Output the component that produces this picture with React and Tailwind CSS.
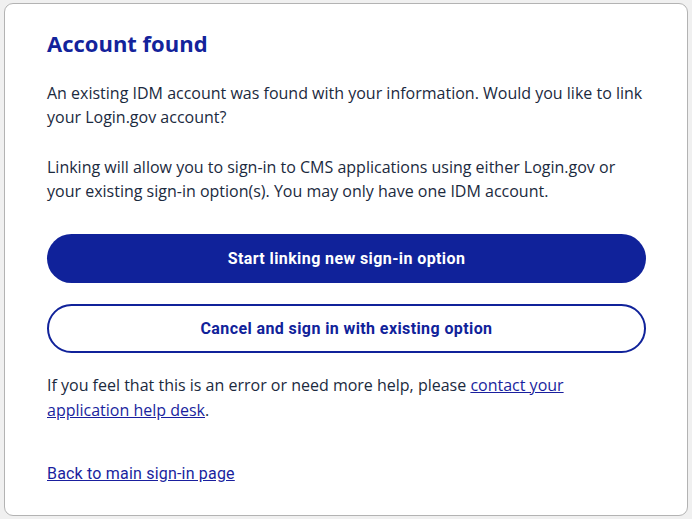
import React from "react";

const App = () => {
  return (
    <div className="min-h-[519px] bg-[#f0f0f0] p-[3px_4px_3px_4px]">
      <div
        className="h-[513px] bg-white border border-[#b3b3b3] rounded-[9px] pl-[42px] pr-[41px] pt-[26px]"
        style={{ fontFamily: '"Open Sans", sans-serif' }}
      >
        <h1 className="text-[22px] leading-[26px] font-bold text-[#13239b]">
          Account found
        </h1>

        <p className="mt-[25px] text-[16px] leading-[24px] text-[#1b2a3e]">
          An existing IDM account was found with your information. Would you like to link
          your Login.gov account?
        </p>

        <p className="mt-[26px] text-[16px] leading-[24px] text-[#1b2a3e]">
          Linking will allow you to sign-in to CMS applications using either Login.gov or
          your existing sign-in option(s). You may only have one IDM account.
        </p>

        <div className="mt-[31px] flex flex-col gap-[21px] font-['Roboto',sans-serif] tracking-[0.025em]">
          <button className="h-[49px] w-full rounded-full bg-[#10229a] text-white text-[16px] font-bold">
            Start linking new sign-in option
          </button>
          <button className="h-[49px] w-full rounded-full border-2 border-[#10229a] bg-white text-[#10229a] text-[16px] font-bold">
            Cancel and sign in with existing option
          </button>
        </div>

        <p className="mt-[20px] text-[16px] leading-[25px] text-[#1b2a3e]">
          If you feel that this is an error or need more help, please{" "}
          <a href="#" className="text-[#1a1f9e] underline">
            contact your application help desk
          </a>
          .
        </p>

        <div className="mt-[38px] leading-[24px]">
          <a
            href="#"
            className="text-[16px] text-[#1a1f9e] underline font-['Roboto',sans-serif] tracking-[0.012em]"
          >
            Back to main sign-in page
          </a>
        </div>
      </div>
    </div>
  );
};

export default App;
